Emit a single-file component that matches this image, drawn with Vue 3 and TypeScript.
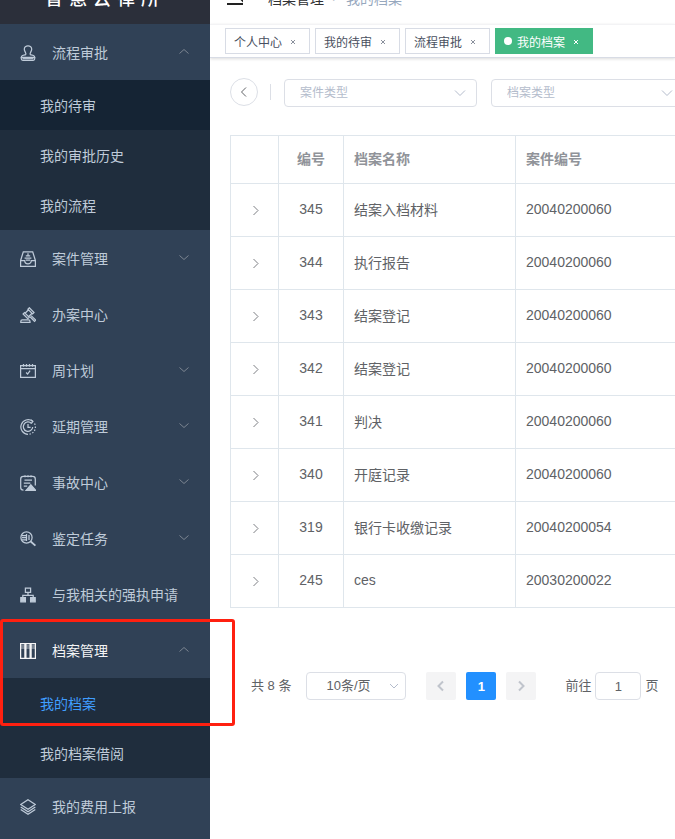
<script setup lang="ts">
import { ref } from 'vue'

interface MenuItem {
  title: string
  icon: string
  arrow?: 'up' | 'down'
  active?: boolean
  marked?: boolean
  children?: { title: string; state?: 'hover' | 'active' }[]
}

interface Archive {
  id: number
  name: string
  caseNo: string
}

const brand = ['智', '慧', '云', '律', '所']

const menu: MenuItem[] = [
  {
    title: '流程审批',
    icon: 'stamp',
    arrow: 'up',
    children: [{ title: '我的待审', state: 'hover' }, { title: '我的审批历史' }, { title: '我的流程' }],
  },
  { title: '案件管理', icon: 'tray', arrow: 'down' },
  { title: '办案中心', icon: 'gavel' },
  { title: '周计划', icon: 'calendar', arrow: 'down' },
  { title: '延期管理', icon: 'clock', arrow: 'down' },
  { title: '事故中心', icon: 'report', arrow: 'down' },
  { title: '鉴定任务', icon: 'search', arrow: 'down' },
  { title: '与我相关的强执申请', icon: 'tree' },
  {
    title: '档案管理',
    icon: 'books',
    arrow: 'up',
    active: true,
    marked: true,
    children: [{ title: '我的档案', state: 'active' }, { title: '我的档案借阅' }],
  },
  { title: '我的费用上报', icon: 'layers' },
]

const tabs = ['个人中心', '我的待审', '流程审批', '我的档案']
const current = ref('我的档案')

const rows: Archive[] = [
  { id: 345, name: '结案入档材料', caseNo: '20040200060' },
  { id: 344, name: '执行报告', caseNo: '20040200060' },
  { id: 343, name: '结案登记', caseNo: '20040200060' },
  { id: 342, name: '结案登记', caseNo: '20040200060' },
  { id: 341, name: '判决', caseNo: '20040200060' },
  { id: 340, name: '开庭记录', caseNo: '20040200060' },
  { id: 319, name: '银行卡收缴记录', caseNo: '20040200054' },
  { id: 245, name: 'ces', caseNo: '20030200022' },
]

const page = ref('1')
</script>

<template>
  <div class="app">
    <aside class="sidebar">
      <div class="brand">
        <div class="brand-name"><span v-for="c in brand" :key="c">{{ c }}</span></div>
      </div>
      <nav>
        <div v-for="item in menu" :key="item.title" class="group" :class="{ marked: item.marked }">
          <button type="button" class="item" :class="{ active: item.active }">
            <svg class="icon" viewBox="0 0 16 16" aria-hidden="true">
              <g v-if="item.icon === 'stamp'">
                <path d="M5.7 9.6C6.8 8.4 4.3 6.6 4.3 4.3a3.7 3.5 0 0 1 7.4 0c0 2.3-2.5 4.1-1.4 5.3l3.2.9c.8.3 1.2.8 1.2 1.8H1.300c0-1 .4-1.500 1.200-1.800z" />
                <path d="M1.300 12.300v1.500q0 1.500 1.500 1.500h10.400q1.500 0 1.500-1.500v-1.500" />
                <path d="M2.500 13.700h11" />
              </g>
              <g v-else-if="item.icon === 'tray'">
                <path d="M.6 9.500 3.300.8h9.400l2.700 8.700v5.900H.6zM.6 9.500h4.100c0 4.400 6.600 4.400 6.600 0h4.100" />
                <path d="M8 2.200v2M5.800 4.800h4.400M4.600 7h6.800M5.800 9h4.400" />
              </g>
              <g v-else-if="item.icon === 'gavel'">
                <path d="m9.300.8 4.700 4.700-1.400 1.400-4.700-4.700zM4.500 5.600l4.700 4.700-1.400 1.400-4.700-4.700zM8.500 2.800 5.100 6.200M12 6.300 8.600 9.700" />
                <path d="m10 9.700 4.500 4.600 1.200-1.200-4.600-4.500M.8 15.400v-1q0-1.500 1.500-1.500h6.200q1.500 0 1.500 1.500v1z" />
              </g>
              <g v-else-if="item.icon === 'calendar'">
                <path d="M.6 2.500h14.800v11.900H.6zM.6 5.600h14.800M3.500 1v2.800M6.500 1v2.800M9.500 1v2.800M12.500 1v2.800" />
                <path d="m6.100 9.500 1.500 1.500 2.500-3.400" />
              </g>
              <g v-else-if="item.icon === 'clock'">
                <path d="M12.600 2.200A7.300 7.300 0 1 0 8 15.300" />
                <path d="M9.500 15.200A7.300 7.300 0 0 0 14.200 4" stroke-dasharray="1.500 1.500" />
                <path d="M11.500 4.500A4.700 4.700 0 1 0 12.700 8M8 5v3.400h2.600M10.800.7l2.100 1.600-1.500 2" />
              </g>
              <g v-else-if="item.icon === 'report'">
                <path d="M3.500 15.200Q.7 15.200.7 12.500V4Q.7 1.300 3.400 1.300h9.200Q15.300 1.300 15.300 4v6.500M5 .3v2M8 .3v2M11 .3v2" />
                <path d="M4.500 5h7.500M3.800 8h6.500M3.800 11h3.400" />
                <path d="m10.900 9.800 4.900 5.700H6z" class="solid" />
              </g>
              <g v-else-if="item.icon === 'search'">
                <circle cx="6.500" cy="6.500" r="5.600" />
                <path d="m10.700 10.500 4.700 4.100" stroke-width="1.800" />
                <path d="M2 4.500h4M2 6.700h4M2 8.900h4M6.500 3v7M9 4v5" />
              </g>
              <g v-else-if="item.icon === 'tree'">
                <path d="M5.400 1.200h5.200v4.200H5.400zM8 5.500v2.800M2.800 10.500V8.300h10.400v2.200" />
                <path d="M.8 10.700h4.600v4.100H.8zM10.600 10.700h4.600v4.100h-4.600z" class="solid" />
              </g>
              <g v-else-if="item.icon === 'books'">
                <path d="M.6.600h4.300v14.800H.6zM5.900.600h4.200v14.800H5.900zM11.100.600h4.300v14.800h-4.300z" />
                <path d="M.6 3h14.800M.6 5h14.800" stroke-width=".7" />
              </g>
              <g v-else>
                <path d="m8 .7 7.300 4.800L8 10.300.7 5.500z" />
                <path d="M.7 8 8 12.800 15.300 8M.7 10.400 8 15.200l7.300-4.800" />
              </g>
            </svg>
            <span class="label">{{ item.title }}</span>
            <svg v-if="item.arrow" class="arrow" viewBox="0 0 12 12" aria-hidden="true">
              <path :d="item.arrow === 'up' ? 'm1.500 7.500 4.500-4 4.500 4' : 'm1.500 3.500 4.500 4 4.500-4'" />
            </svg>
          </button>
          <div v-if="item.children" class="sub">
            <a v-for="child in item.children" :key="child.title" href="#" :class="child.state">{{ child.title }}</a>
          </div>
        </div>
      </nav>
    </aside>

    <main class="main">
      <header class="topbar">
        <div class="topbar-inner">
          <button type="button" class="burger" aria-label="菜单">
            <svg viewBox="0 0 16 12" aria-hidden="true"><path d="M0 1h16M0 6h13M0 11h16M16 4v4l-2-2z" /></svg>
          </button>
          <div class="crumbs"><a href="#">档案管理</a><span class="slash">/</span><span>我的档案</span></div>
        </div>
      </header>

      <div class="tabs">
        <div v-for="tab in tabs" :key="tab" class="tab" :class="{ on: tab === current }">
          <a href="#" @click.prevent="current = tab">{{ tab }}</a>
          <button type="button" class="close" aria-label="关闭">
            <svg viewBox="0 0 6 6" aria-hidden="true"><path d="m1 1 4 4m0-4-4 4" /></svg>
          </button>
        </div>
      </div>

      <section class="content">
        <div class="filters">
          <button type="button" class="back" aria-label="返回">
            <svg viewBox="0 0 12 12" aria-hidden="true"><path d="M8 1.500 3.500 6 8 10.500" /></svg>
          </button>
          <span class="divider"></span>
          <div class="select">
            <select aria-label="案件类型"><option>案件类型</option></select>
            <svg viewBox="0 0 12 12" aria-hidden="true"><path d="m1 3.500 5 5 5-5" /></svg>
          </div>
          <div class="select">
            <select aria-label="档案类型"><option>档案类型</option></select>
            <svg viewBox="0 0 12 12" aria-hidden="true"><path d="m1 3.500 5 5 5-5" /></svg>
          </div>
        </div>

        <div class="table-wrap">
          <table>
            <colgroup><col class="c-open" /><col class="c-id" /><col class="c-name" /><col class="c-case" /></colgroup>
            <thead>
              <tr><th></th><th class="mid">编号</th><th>档案名称</th><th>案件编号</th></tr>
            </thead>
            <tbody>
              <tr v-for="row in rows" :key="row.id">
                <td class="mid">
                  <button type="button" class="expand" aria-label="展开">
                    <svg viewBox="0 0 12 12" aria-hidden="true"><path d="M4.500 2 9 6.500 4.500 11" /></svg>
                  </button>
                </td>
                <td class="mid">{{ row.id }}</td>
                <td>{{ row.name }}</td>
                <td>{{ row.caseNo }}</td>
              </tr>
            </tbody>
          </table>
        </div>

        <div class="pager">
          <span class="total">共 8 条</span>
          <div class="select size">
            <select aria-label="每页条数"><option>10条/页</option></select>
            <svg viewBox="0 0 12 12" aria-hidden="true"><path d="m2 4 4 4 4-4" /></svg>
          </div>
          <div class="pages">
            <button type="button" disabled aria-label="上一页">
              <svg viewBox="0 0 12 12" aria-hidden="true"><path d="M8 1.500 3.500 6 8 10.500" /></svg>
            </button>
            <button type="button" class="now">1</button>
            <button type="button" disabled aria-label="下一页">
              <svg viewBox="0 0 12 12" aria-hidden="true"><path d="M4 1.500 8.500 6 4 10.500" /></svg>
            </button>
          </div>
          <div class="jump">
            <label for="jump-page">前往</label>
            <input id="jump-page" v-model="page" type="text" />
            <span>页</span>
          </div>
        </div>
      </section>
    </main>
  </div>
</template>

<style>
body {
  background: #fff;
}
</style>

<style scoped>
.app {
  display: flex;
  min-height: 100vh;
  overflow: hidden;
  font-family: 'Liberation Sans', 'Noto Sans CJK SC', sans-serif;
  font-size: 14px;
  color: #606266;
}
.app * {
  box-sizing: border-box;
}
button,
input,
select {
  font: inherit;
  color: inherit;
  margin: 0;
  padding: 0;
  border: 0;
  background: none;
}
a {
  color: inherit;
  text-decoration: none;
}
svg {
  display: block;
  fill: none;
  stroke: currentColor;
}

.sidebar {
  position: relative;
  z-index: 1;
  flex: 0 0 210px;
  background: #304156;
  color: #bfcbd9;
}
.brand {
  display: flex;
  align-items: flex-end;
  height: 24px;
  overflow: hidden;
  background: #2b2f3a;
}
.brand-name {
  display: flex;
  flex: 1;
  flex-shrink: 0;
  align-items: center;
  justify-content: center;
  gap: 6px;
  height: 54px;
  padding-right: 6px;
  font-size: 18px;
  font-weight: 500;
  color: #fff;
}
.item {
  display: flex;
  align-items: center;
  width: 100%;
  height: 56px;
  padding: 0 20px;
  gap: 16px;
  text-align: left;
}
.item.active {
  color: #f4f4f5;
}
.icon {
  flex: none;
  width: 16px;
  height: 18px;
  padding-top: 2px;
  stroke-width: 1.25;
}
.solid {
  fill: currentColor;
}
.label {
  flex: 1;
  white-space: nowrap;
}
.arrow {
  flex: none;
  width: 12px;
  height: 12px;
  color: #7c8591;
}
.sub {
  background: #1f2d3d;
}
.sub a {
  display: block;
  height: 50px;
  padding-left: 40px;
  line-height: 52px;
}
.sub a.hover {
  background: #152434;
}
.sub a.active {
  color: #409eff;
}
.marked {
  position: relative;
}
.marked::after {
  content: '';
  position: absolute;
  top: -3px;
  left: 0;
  right: -25px;
  bottom: 52px;
  border: 3px solid #ff2010;
  border-radius: 3px;
  pointer-events: none;
}

.main {
  flex: 1;
  min-width: 0;
}
.topbar {
  display: flex;
  align-items: flex-end;
  height: 24px;
  overflow: hidden;
}
.topbar-inner {
  display: flex;
  flex-shrink: 0;
  align-items: center;
  height: 50px;
  padding-left: 17px;
  gap: 25px;
}
.burger svg {
  width: 16px;
  height: 12px;
  color: #222;
  stroke-width: 2;
}
.crumbs {
  display: flex;
  gap: 9px;
  padding-bottom: 2px;
  color: #97a8be;
}
.crumbs a {
  color: #303133;
}
.slash {
  color: #c0c4cc;
}

.tabs {
  display: flex;
  align-items: center;
  gap: 5px;
  height: 34px;
  padding-left: 15px;
  border-top: 1px solid #f3f3f5;
  border-bottom: 1px solid #d8dce5;
  box-shadow: 0 1px 3px rgba(0, 0, 0, 0.14);
}
.tab {
  display: flex;
  align-items: center;
  height: 26px;
  padding: 0 13px 0 8px;
  gap: 8px;
  border: 1px solid #d8dce5;
  font-size: 12px;
  color: #495060;
}
.close {
  padding-top: 2px;
}
.close svg {
  width: 6px;
  height: 6px;
  color: #8a909c;
}
.tab.on {
  border-color: #42b983;
  background: #42b983;
  color: #fff;
}
.tab.on::before {
  content: '';
  width: 8px;
  height: 8px;
  margin-right: -3px;
  border-radius: 50%;
  background: #fff;
}
.tab.on .close svg {
  color: #fff;
}

.content {
  padding: 20px 0 0 20px;
}
.filters {
  display: flex;
  align-items: center;
  height: 28px;
}
.back {
  display: grid;
  place-items: center;
  flex: none;
  width: 28px;
  height: 28px;
  border: 1px solid #dcdfe6;
  border-radius: 50%;
}
.back svg {
  width: 12px;
  height: 12px;
}
.divider {
  flex: none;
  width: 1px;
  height: 16px;
  margin: 0 13px 0 12px;
  background: #dcdfe6;
}
.select {
  position: relative;
  flex: 0 0 193px;
  margin-right: 14px;
  color: #b4bccc;
}
.filters .select {
  margin-top: 2px;
}
.select select {
  display: block;
  width: 100%;
  height: 28px;
  padding: 0 30px 0 15px;
  border: 1px solid #dcdfe6;
  border-radius: 4px;
  appearance: none;
  font-size: 12px;
}
.select svg {
  position: absolute;
  top: 8px;
  right: 11px;
  width: 12px;
  height: 12px;
  pointer-events: none;
}

.table-wrap {
  margin-top: 29px;
  overflow: hidden;
}
table {
  width: 100%;
  table-layout: fixed;
  border-collapse: separate;
  border-spacing: 0;
  border-top: 1px solid #dfe6ec;
  border-left: 1px solid #dfe6ec;
}
.c-open {
  width: 48px;
}
.c-id {
  width: 65px;
}
.c-name {
  width: 172px;
}
th,
td {
  height: 53px;
  padding: 0 10px 3px;
  border-right: 1px solid #dfe6ec;
  border-bottom: 1px solid #dfe6ec;
  text-align: left;
}
th:last-child,
td:last-child {
  border-right: 0;
}
th {
  height: 48px;
  color: #909399;
}
.mid {
  text-align: center;
}
.expand {
  display: inline-block;
  vertical-align: middle;
}
.expand svg {
  width: 12px;
  height: 12px;
  color: #7c7e83;
}

.pager {
  display: flex;
  align-items: center;
  margin-top: 64px;
  padding-left: 21px;
  font-size: 13px;
  white-space: nowrap;
}
.total {
  padding-bottom: 3px;
}
.pager .size {
  flex: 0 0 100px;
  margin: 0 20px 0 15px;
}
.size select {
  padding: 0 24px 2px 8px;
  font-size: 13px;
  color: #606266;
  text-align: center;
  text-align-last: center;
}
.size svg {
  right: 6px;
}
.pages {
  display: flex;
  gap: 10px;
}
.pages button {
  display: grid;
  place-items: center;
  width: 30px;
  height: 28px;
  border-radius: 2px;
  background: #f4f4f5;
  color: #c0c4cc;
}
.pages svg {
  width: 12px;
  height: 12px;
  stroke-width: 2;
}
.pages .now {
  background: #2290ff;
  font-weight: 700;
  color: #fff;
}
.jump {
  display: flex;
  align-items: center;
  gap: 4px;
  margin-left: 29px;
}
.jump label,
.jump span {
  padding-bottom: 3px;
}
.jump input {
  width: 46px;
  height: 28px;
  border: 1px solid #dcdfe6;
  border-radius: 4px;
  text-align: center;
}
</style>
